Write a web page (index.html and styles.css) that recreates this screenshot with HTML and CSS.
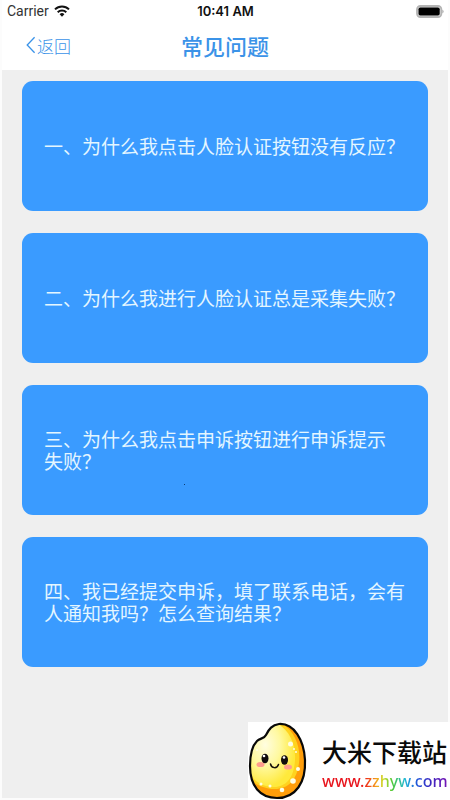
FILE: index.html
```html
<!DOCTYPE html>
<html lang="zh-CN">
<head>
<meta charset="utf-8">
<meta name="viewport" content="width=device-width, initial-scale=1">
<title>常见问题</title>
<link rel="stylesheet" href="styles.css">
</head>
<body>
<header class="top">
  <div class="status">
    <div class="carrier">
      <span>Carrier</span>
      <svg class="wifi" viewBox="0 0 16 12" aria-hidden="true">
        <path d="M1 4.4a10 10 0 0 1 14 0" fill="none" stroke="#111" stroke-width="2"/>
        <path d="M3.7 7.2a6.2 6.2 0 0 1 8.600 0" fill="none" stroke="#111" stroke-width="2"/>
        <path d="M8 11.800 5.600 9.300a3.400 3.400 0 0 1 4.800 0z" fill="#111"/>
      </svg>
    </div>
    <time class="clock">10:41 AM</time>
    <svg class="battery" viewBox="0 0 28 13" aria-hidden="true">
      <rect x="1" y="1" width="24.400" height="11" rx="3.400" fill="#ddd" stroke="#b4b4b4" stroke-width="1.800"/>
      <rect x="2.500" y="2.500" width="21.200" height="8" rx="1.800" fill="#000"/>
      <path d="M26.500 4.800c1.400.5 1.400 2.900 0 3.400z" fill="#999"/>
    </svg>
  </div>
  <nav class="nav">
    <a class="back" href="#">
      <svg class="chevron" viewBox="0 0 10 18" aria-hidden="true"><path d="M8.600 1.200 1.200 9l7.400 7.800" fill="none" stroke="currentColor" stroke-width="1.300"/></svg>
      <span>返回</span>
    </a>
    <h1 class="title">常见问题</h1>
  </nav>
</header>
<main class="questions">
  <a class="card" href="#"><span>一、为什么我点击人脸认证按钮没有反应？</span></a>
  <a class="card" href="#"><span>二、为什么我进行人脸认证总是采集失败？</span></a>
  <a class="card speck" href="#"><span>三、为什么我点击申诉按钮进行申诉提示<br>失败？</span></a>
  <a class="card" href="#"><span>四、我已经提交申诉，填了联系电话，会有人通知我吗？怎么查询结果？</span></a>
</main>
<aside class="brand">
  <svg class="mascot" viewBox="0 0 60 78" aria-hidden="true">
    <defs>
      <radialGradient id="grain" cx=".35" cy=".35" r=".65">
        <stop offset="0" stop-color="#fffde0"/>
        <stop offset=".5" stop-color="#fff9a0"/>
        <stop offset="1" stop-color="#ffe93c"/>
      </radialGradient>
      <clipPath id="shell"><path d="M31 2C46 1 56 18 57 38c1 22-9 38-28 38C12 76 2 64 2 44c0-10 2-20 7-25 3-3 7-2 9-6 3-6 6-10 13-11z"/></clipPath>
    </defs>
    <g clip-path="url(#shell)">
      <path d="M0 0h60v78H0z" fill="#ff9d0a"/>
      <path d="M33 1c14 8 20 24 18 40-2 17-11 26-24 26-12 0-22-6-27-12V0z" fill="#ffd21f"/>
      <path d="M30 2c12 7 18 21 17 36-1 18-9 27-21 27C13 65 2 57 1 46V0z" fill="url(#grain)"/>
      <g fill="#fffde5">
        <circle cx="42.500" cy="22" r="2.500"/><circle cx="48" cy="30" r="1"/><circle cx="46" cy="27" r="1"/>
        <circle cx="50" cy="47" r="2"/><circle cx="45" cy="59" r="2.800"/><circle cx="34" cy="68" r="2.300"/>
        <circle cx="13" cy="62" r="1.500"/><circle cx="22" cy="64" r="1.500"/><circle cx="9" cy="28" r="1"/>
      </g>
    </g>
    <path d="M31 2C46 1 56 18 57 38c1 22-9 38-28 38C12 76 2 64 2 44c0-10 2-20 7-25 3-3 7-2 9-6 3-6 6-10 13-11z" fill="none" stroke="#080808" stroke-width="2.200"/>
    <ellipse cx="12.500" cy="42.500" rx="4" ry="2.600" fill="#ff9d8c"/><ellipse cx="40" cy="45" rx="4" ry="2.600" fill="#ff9d8c"/>
    <ellipse cx="17" cy="36.500" rx="3.500" ry="4.800" fill="#100b0b"/><ellipse cx="36.500" cy="38" rx="3.500" ry="4.800" fill="#100b0b"/>
    <circle cx="16" cy="34" r="1.300" fill="#fff"/><circle cx="36" cy="35.500" r="1.300" fill="#fff"/>
    <path d="M22.500 42c1 4.500 6.500 5 8 .5" fill="none" stroke="#15100a" stroke-width="1.500" stroke-linecap="round"/>
  </svg>
  <div class="brand-text">
    <strong class="brand-name">大米下载站</strong>
    <span class="brand-url">www.zzhyw.com</span>
  </div>
</aside>
</body>
</html>
```
FILE: styles.css
```css
* {
  box-sizing: border-box;
}

body {
  margin: 0;
  min-height: 100vh;
  background: #efefef;
  border: solid #fcfcfc;
  border-width: 0 2px 2px;
  font-family: "Noto Sans CJK SC", sans-serif;
}

a {
  color: inherit;
  text-decoration: none;
}

.top {
  height: 70px;
  background: #fff;
}

.status {
  display: grid;
  grid-template-columns: 1fr auto 1fr;
  align-items: center;
  height: 22px;
  padding: 0 4px 0 5px;
  font-family: Roboto, sans-serif;
  font-size: 14px;
  color: #333;
}

.carrier {
  display: flex;
  align-items: center;
  gap: 5px;
}

.wifi {
  width: 16px;
  height: 12px;
}

.clock {
  font-family: Inter, sans-serif;
  font-size: 13px;
  font-weight: 600;
  color: #111;
}

.battery {
  justify-self: end;
  width: 28px;
  height: 13px;
}

.nav {
  display: grid;
  grid-template-columns: 1fr auto 1fr;
  align-items: center;
  height: 46px;
  padding: 0 24px;
  color: #3b93e8;
}

.back {
  display: flex;
  align-items: center;
  gap: 1px;
  font-size: 17px;
  font-weight: 300;
}

.chevron {
  width: 10px;
  height: 18px;
}

.title {
  margin: 0;
  font-size: 22px;
  line-height: 32px;
  font-weight: 500;
}

.questions {
  display: flex;
  flex-direction: column;
  gap: 22px;
  padding: 11px 20px 22px;
}

.card {
  position: relative;
  display: flex;
  align-items: center;
  min-height: 130px;
  padding: 0 22px;
  border-radius: 11px;
  background: #3a9bff;
  color: #e4f6ff;
  font-size: 19px;
  line-height: 22px;
}

.speck::after {
  content: "";
  position: absolute;
  left: 40%;
  bottom: 30px;
  width: 1px;
  height: 1px;
  background: #103c70;
}

.brand {
  position: fixed;
  right: 0;
  bottom: 0;
  display: flex;
  align-items: center;
  width: 202px;
  height: 78px;
  background: #fff;
}

.mascot {
  flex: none;
  width: 60px;
  height: 78px;
}

.brand-text {
  display: flex;
  flex-direction: column;
  padding: 8px 0 0 14px;
  white-space: nowrap;
}

.brand-name {
  font-size: 25px;
  line-height: 32px;
  font-weight: 500;
  color: #0a0a0a;
}

.brand-url {
  align-self: flex-start;
  font-family: "Noto Sans", sans-serif;
  font-size: 16px;
  line-height: 28px;
  font-weight: 500;
  background: linear-gradient(90deg, #e8141c 0 30%, #f03a18 36%, #f5a01c 43%, #c8dc28 49%, #4cc83c 56%, #20b8d8 66%, #1e50d8 76%, #3c28c0 86%, #7814b4);
  background-clip: text;
  -webkit-background-clip: text;
  color: transparent;
}
```
